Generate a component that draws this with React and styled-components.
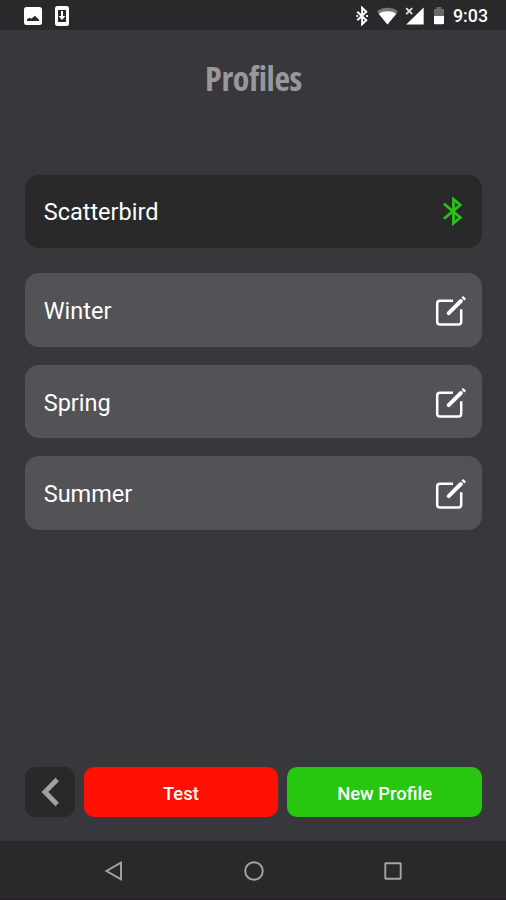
import styled, { createGlobalStyle } from "styled-components";

const profiles = ["Winter", "Spring", "Summer"];

export default function App() {
   return (
      <Screen>
         <GlobalStyle />
         <StatusBar>
            <StatusGroup>
               <svg width="18" height="18" viewBox="0 0 18 18">
                  <rect width="18" height="18" rx="2.5" fill="#fff" />
                  <path d="M3 14v-1.8l2.5-1.4 1.8 1L11 8.8l4 4V14z" fill="#29292b" />
               </svg>
               <svg width="14" height="20" viewBox="0 0 14 20">
                  <rect width="14" height="20" rx="2.5" fill="#fff" />
                  <rect x="3" y="4" width="8" height="12" fill="#29292b" />
                  <path d="M6 5h2v5h2.4L7 14 3.6 10H6z" fill="#fff" />
               </svg>
            </StatusGroup>
            <StatusGroup>
               <StatusIcons />
               <Clock>9:03</Clock>
            </StatusGroup>
         </StatusBar>
         <Content>
            <Title>Profiles</Title>
            <Device>
               <span>Scatterbird</span>
               <BluetoothIcon />
            </Device>
            <List>
               {profiles.map((name) => (
                  <Card key={name}>
                     <span>{name}</span>
                     <EditIcon />
                  </Card>
               ))}
            </List>
            <Actions>
               <BackButton aria-label="Back">
                  <svg width="50" height="50" viewBox="0 0 50 50">
                     <path d="M32.2 12.5L19.9 25l12.3 12.5" fill="none" stroke="#a2a2a4" strokeWidth="4.8" />
                  </svg>
               </BackButton>
               <Action bg="#ff1002">Test</Action>
               <Action bg="#27c60f">New Profile</Action>
            </Actions>
         </Content>
         <NavBar>
            <svg width="20" height="22" viewBox="0 0 20 22">
               <path d="M17 2.7v16.6L2.5 11z" />
            </svg>
            <svg width="22" height="22" viewBox="0 0 22 22">
               <circle cx="11" cy="11" r="8.8" />
            </svg>
            <svg width="20" height="22" viewBox="0 0 20 22">
               <rect x="2.3" y="3.3" width="15.4" height="15.4" rx="0.5" />
            </svg>
         </NavBar>
      </Screen>
   );
}

function StatusIcons() {
   return (
      <svg width="92" height="22" viewBox="0 0 92 22">
         <path d="M2.3 6.8l9 8.4-4.2 3.9V2.9l4.2 3.9-9 8.4" fill="none" stroke="#fff" strokeWidth="2" />
         <path d="M1.3 11h1.8M11.1 11h1.8" stroke="#fff" strokeWidth="1.8" />
         <path d="M22 6.3C28 1.7 37 1.7 43 6.3L32.5 19.5z" fill="#777779" />
         <path d="M23.6 8.8C28.6 5.5 36.4 5.5 41.4 8.8L32.5 19.5z" fill="#fff" />
         <path d="M68.7 2.4v17H51.2z" fill="#fff" />
         <path d="M50 1h9.5v9.5H50z" fill="#29292b" />
         <path d="M51.2 3.2l6 6M57.2 3.2l-6 6" stroke="#ddd" strokeWidth="1.9" />
         <path d="M81.5 2h5v2H89v7H79V4h2.5z" fill="#69696b" />
         <path d="M79 11h10v7a1.3 1.3 0 0 1-1.3 1.3h-7.4A1.3 1.3 0 0 1 79 18z" fill="#fff" />
      </svg>
   );
}

function BluetoothIcon() {
   return (
      <svg width="24" height="34" viewBox="0 0 24 34">
         <path
            d="M3 8.8L19.2 22.5 12.5 28.3V4.2L19.2 10 3 23.7"
            fill="none"
            stroke="#27c31a"
            strokeWidth="2.8"
         />
      </svg>
   );
}

function EditIcon() {
   return (
      <svg width="34" height="34" viewBox="0 0 34 34" fill="none" stroke="#fff">
         <path
            d="M18 6.7H5a2.8 2.8 0 0 0-2.8 2.8v18.2A2.8 2.8 0 0 0 5 30.5h18.4a2.8 2.8 0 0 0 2.8-2.8V15.2"
            strokeWidth="2.5"
         />
         <path d="M13.7 19.2L25.9 7" strokeWidth="3.9" strokeLinecap="round" />
         <path d="M27.9 5l1.7-1.7" strokeWidth="4" />
      </svg>
   );
}

const GlobalStyle = createGlobalStyle`
   body {
      margin: 0;
      background: #38373b;
   }

   * {
      box-sizing: border-box;
   }
`;

const Screen = styled.div`
   width: 506px;
   height: 900px;
   display: flex;
   flex-direction: column;
   overflow: hidden;
   background: #38373b;
   color: #fff;
   font-family: Roboto, sans-serif;

   svg {
      display: block;
      flex: none;
   }
`;

const StatusBar = styled.header`
   height: 30px;
   display: flex;
   justify-content: space-between;
   align-items: center;
   padding: 1px 18px 0 24px;
   background: #29292b;
`;

const StatusGroup = styled.div`
   display: flex;
   align-items: center;
   gap: 13px;
`;

const Clock = styled.span`
   width: 35px;
   margin-left: -7px;
   font-size: 17.8px;
   font-weight: 500;
   line-height: 22px;
   padding-top: 1px;
`;

const Content = styled.main`
   flex: 1;
   display: flex;
   flex-direction: column;
   padding: 28px 24px 24px 25px;
`;

const Title = styled.h1`
   margin: 0 0 76.5px;
   height: 40px;
   color: #98989b;
   font-family: "Open Sans", sans-serif;
   font-size: 34px;
   font-weight: 700;
   font-stretch: 75%;
   letter-spacing: -0.4px;
   line-height: 40px;
   text-align: center;
`;

const Card = styled.div`
   height: 73.7px;
   display: flex;
   align-items: center;
   justify-content: space-between;
   padding: 2px 13.5px 0 18.7px;
   border-radius: 14px;
   background: #535256;
   font-size: 23.5px;
`;

const Device = styled(Card)`
   padding: 2px 17.5px 0 18.7px;
   margin-bottom: 25px;
   background: #29292a;
`;

const List = styled.div`
   display: flex;
   flex-direction: column;
   gap: 17.8px;
`;

const Actions = styled.div`
   display: grid;
   grid-template-columns: 49.5px 1fr 1fr;
   gap: 9px;
   margin-top: auto;
`;

const Action = styled.button`
   height: 50px;
   padding: 2px 0 0;
   border: none;
   border-radius: 10px;
   background: ${(props) => props.bg};
   color: #fff;
   font-family: inherit;
   font-size: 18.4px;
   font-weight: 500;
`;

const BackButton = styled(Action)`
   padding: 0;
   background: #29292a;
`;

const NavBar = styled.nav`
   height: 59px;
   display: flex;
   align-items: center;
   justify-content: space-between;
   padding: 2px 103px 0 104px;
   background: #29292b;
   border-bottom: 1px solid #251d20;

   svg {
      fill: none;
      stroke: #a4a4a6;
      stroke-width: 1.9;
   }
`;
